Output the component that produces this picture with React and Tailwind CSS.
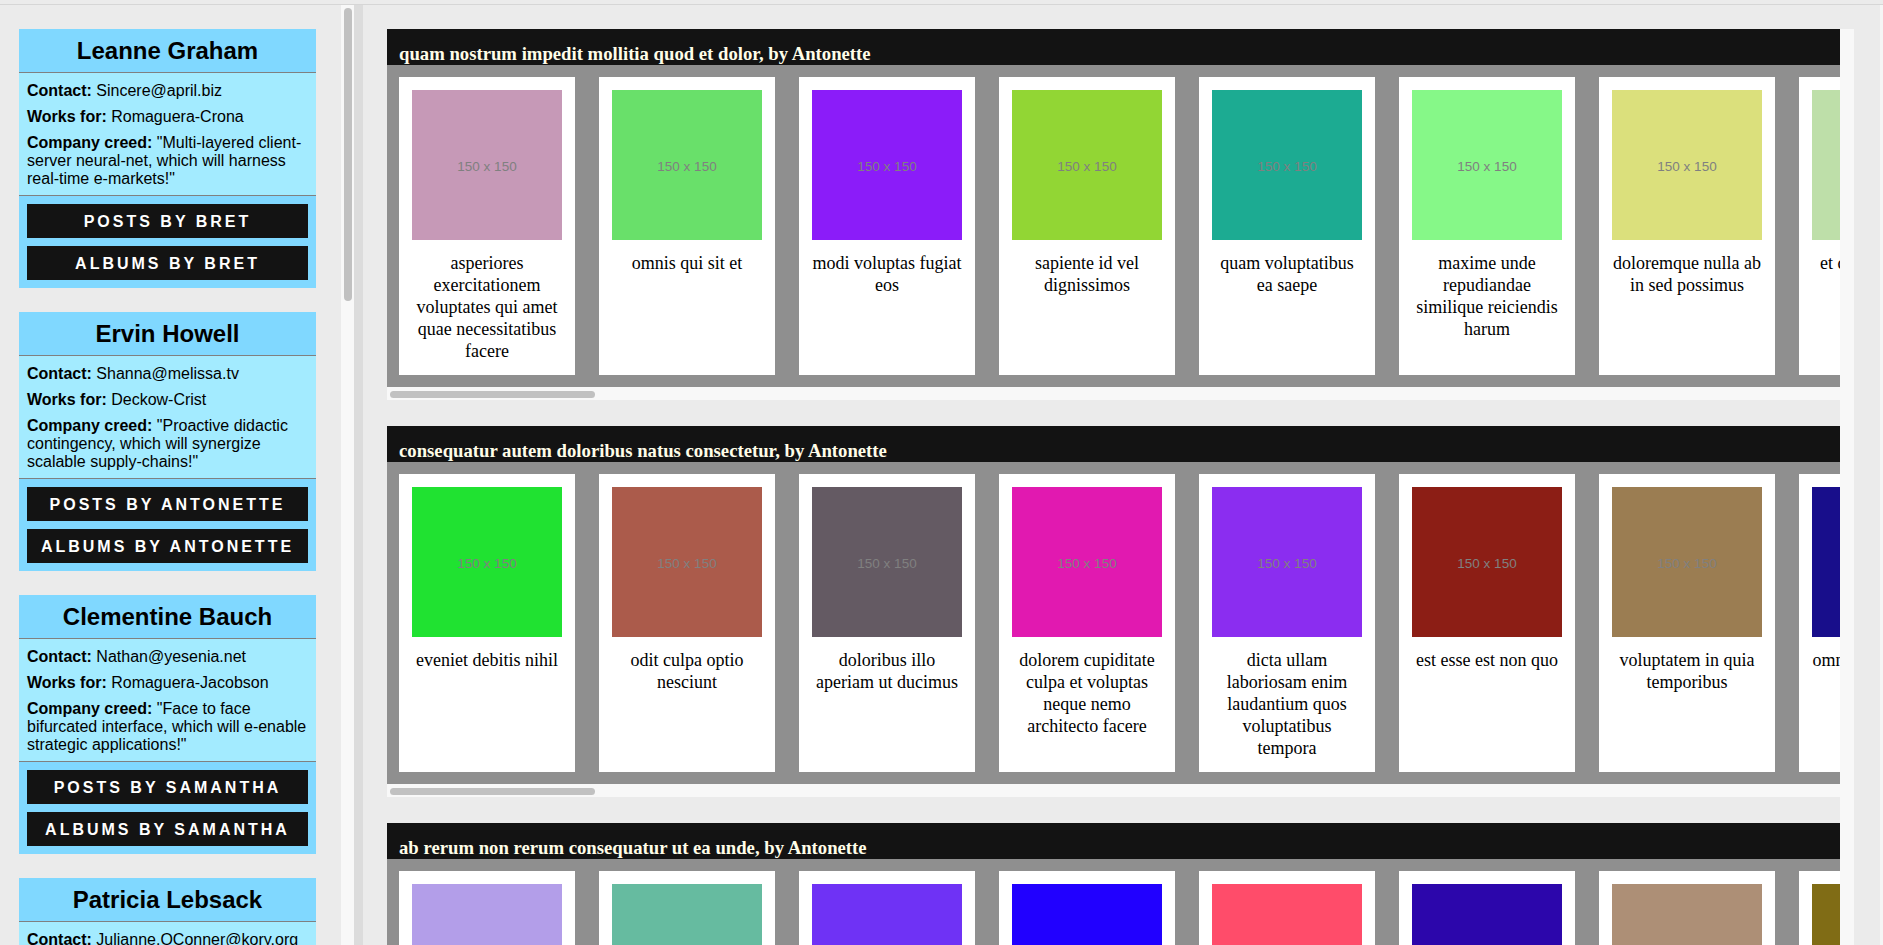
import React from 'react'

// JSONPlaceholder-ish data: users on the left, Antonette's albums on the right.
const USERS = [
  {
    name: 'Leanne Graham',
    email: 'Sincere@april.biz',
    company: 'Romaguera-Crona',
    creed: '"Multi-layered client-server neural-net, which will harness real-time e-markets!"',
    username: 'Bret',
  },
  {
    name: 'Ervin Howell',
    email: 'Shanna@melissa.tv',
    company: 'Deckow-Crist',
    creed: '"Proactive didactic contingency, which will synergize scalable supply-chains!"',
    username: 'Antonette',
  },
  {
    name: 'Clementine Bauch',
    email: 'Nathan@yesenia.net',
    company: 'Romaguera-Jacobson',
    creed: '"Face to face bifurcated interface, which will e-enable strategic applications!"',
    username: 'Samantha',
  },
  {
    name: 'Patricia Lebsack',
    email: 'Julianne.OConner@kory.org',
    company: 'Robel-Corkery',
    creed: '"Multi-tiered zero tolerance productivity, which will transition cutting-edge web services!"',
    username: 'Karianne',
  },
]

const ALBUMS = [
  {
    title: 'quam nostrum impedit mollitia quod et dolor',
    photos: [
      ['#c699b7', 'asperiores exercitationem voluptates qui amet quae necessitatibus facere'],
      ['#69e06a', 'omnis qui sit et'],
      ['#8b1cf9', 'modi voluptas fugiat eos'],
      ['#92d634', 'sapiente id vel dignissimos'],
      ['#1cab92', 'quam voluptatibus ea saepe'],
      ['#86f888', 'maxime unde repudiandae similique reiciendis harum'],
      ['#dbe07c', 'doloremque nulla ab in sed possimus'],
      ['#bedfa9', 'et quia voluptatem ut iste'],
    ],
  },
  {
    title: 'consequatur autem doloribus natus consectetur',
    photos: [
      ['#20e231', 'eveniet debitis nihil'],
      ['#ab5b4b', 'odit culpa optio nesciunt'],
      ['#645a63', 'doloribus illo aperiam ut ducimus'],
      ['#e119b0', 'dolorem cupiditate culpa et voluptas neque nemo architecto facere'],
      ['#8b2df0', 'dicta ullam laboriosam enim laudantium quos voluptatibus tempora'],
      ['#8c1e15', 'est esse est non quo'],
      ['#9b7d52', 'voluptatem in quia temporibus'],
      ['#180e8b', 'omnis rerum dolores voluptatem'],
    ],
  },
  {
    title: 'ab rerum non rerum consequatur ut ea unde',
    photos: [
      ['#b39ee9', 'nihil et voluptatem'],
      ['#66bba0', 'ut ad quae'],
      ['#6f32f5', 'ipsum quia illo'],
      ['#2100ff', 'qui ex voluptas'],
      ['#ff4c6a', 'sit illum aut'],
      ['#2c06ab', 'aut qui velit'],
      ['#ad8f76', 'quia est eos'],
      ['#806c15', 'rerum et odit'],
    ],
  },
]

function UserCard({ user }) {
  return (
    <div className="w-[297px] shrink-0 bg-[#80d8ff] text-black">
      <div className="flex h-[44px] items-center justify-center border-b border-[#808080]">
        <h2 className="text-[24px] font-bold leading-[28px]">{user.name}</h2>
      </div>
      <div className="flex flex-col gap-2 border-b border-[#808080] bg-[#a3ebff] px-2 pt-[9px] pb-[7px] text-[16px] leading-[18px]">
        <p>
          <b>Contact:</b> {user.email}
        </p>
        <p>
          <b>Works for:</b> {user.company}
        </p>
        <p>
          <b>Company creed:</b> {user.creed}
        </p>
      </div>
      <div className="flex flex-col gap-2 p-2">
        <button className="h-[34px] bg-[#131313] pt-[1px] text-[16px] font-bold uppercase tracking-[3px] text-white">
          Posts by {user.username}
        </button>
        <button className="h-[34px] bg-[#131313] pt-[1px] text-[16px] font-bold uppercase tracking-[3px] text-white">
          Albums by {user.username}
        </button>
      </div>
    </div>
  )
}

function PhotoCard({ color, title }) {
  return (
    <div className="flex h-[298px] w-[176px] shrink-0 flex-col bg-white p-[13px]">
      <div
        className="flex h-[150px] w-[150px] shrink-0 items-center justify-center pt-[5px] font-['Liberation_Sans',Arial,sans-serif] text-[13.5px] text-[#808080]"
        style={{ backgroundColor: color }}
      >
        150 x 150
      </div>
      <p className="mt-3 text-center text-[18px] leading-[22px] text-black">{title}</p>
    </div>
  )
}

function AlbumStrip({ album }) {
  return (
    <section className="mb-[26px] w-full font-['Liberation_Serif','Times_New_Roman',serif]">
      <div className="flex h-9 items-end bg-[#131313] px-3">
        <h3 className="whitespace-nowrap text-[18.72px] font-bold leading-[22px] text-[#fffde8]">
          {album.title}, by Antonette
        </h3>
      </div>
      <div className="flex gap-6 bg-[#8f8f8f] p-3">
        {album.photos.map(([color, title]) => (
          <PhotoCard key={title} color={color} title={title} />
        ))}
      </div>
      {/* horizontal scrollbar */}
      <div className="h-[13px] bg-[#f8f8f8] pt-1 pl-[3px]">
        <div className="h-[7px] w-[205px] rounded-full bg-[#c1c1c1]" />
      </div>
    </section>
  )
}

export default function App() {
  return (
    <div className="h-screen overflow-hidden bg-[#ebebeb] pt-1 font-['Liberation_Sans',Arial,sans-serif]">
      <div className="flex h-[941px] border-t border-[#d6d6d6]">
        {/* users column */}
        <div className="flex w-[341px] shrink-0 flex-col gap-6 overflow-hidden pt-6 pl-[19px]">
          {USERS.map((u) => (
            <UserCard key={u.name} user={u} />
          ))}
        </div>
        <div className="w-[13px] shrink-0 bg-[#f8f8f8] pt-[3px] pl-[3px]">
          <div className="h-[293px] w-2 rounded-full bg-[#c1c1c1]" />
        </div>
        <div className="w-[9px] shrink-0 bg-[#dcdcdc]" />

        {/* albums column */}
        <div className="flex flex-1 pt-6 pl-6">
          <div className="w-[1453px] shrink-0 overflow-hidden">
            {ALBUMS.map((a) => (
              <AlbumStrip key={a.title} album={a} />
            ))}
          </div>
          <div className="w-[14px] shrink-0 bg-[#f8f8f8]" />
          <div className="flex-1" />
        </div>
        <div className="w-[3px] shrink-0 bg-[#f5f5f5]" />
      </div>
    </div>
  )
}
